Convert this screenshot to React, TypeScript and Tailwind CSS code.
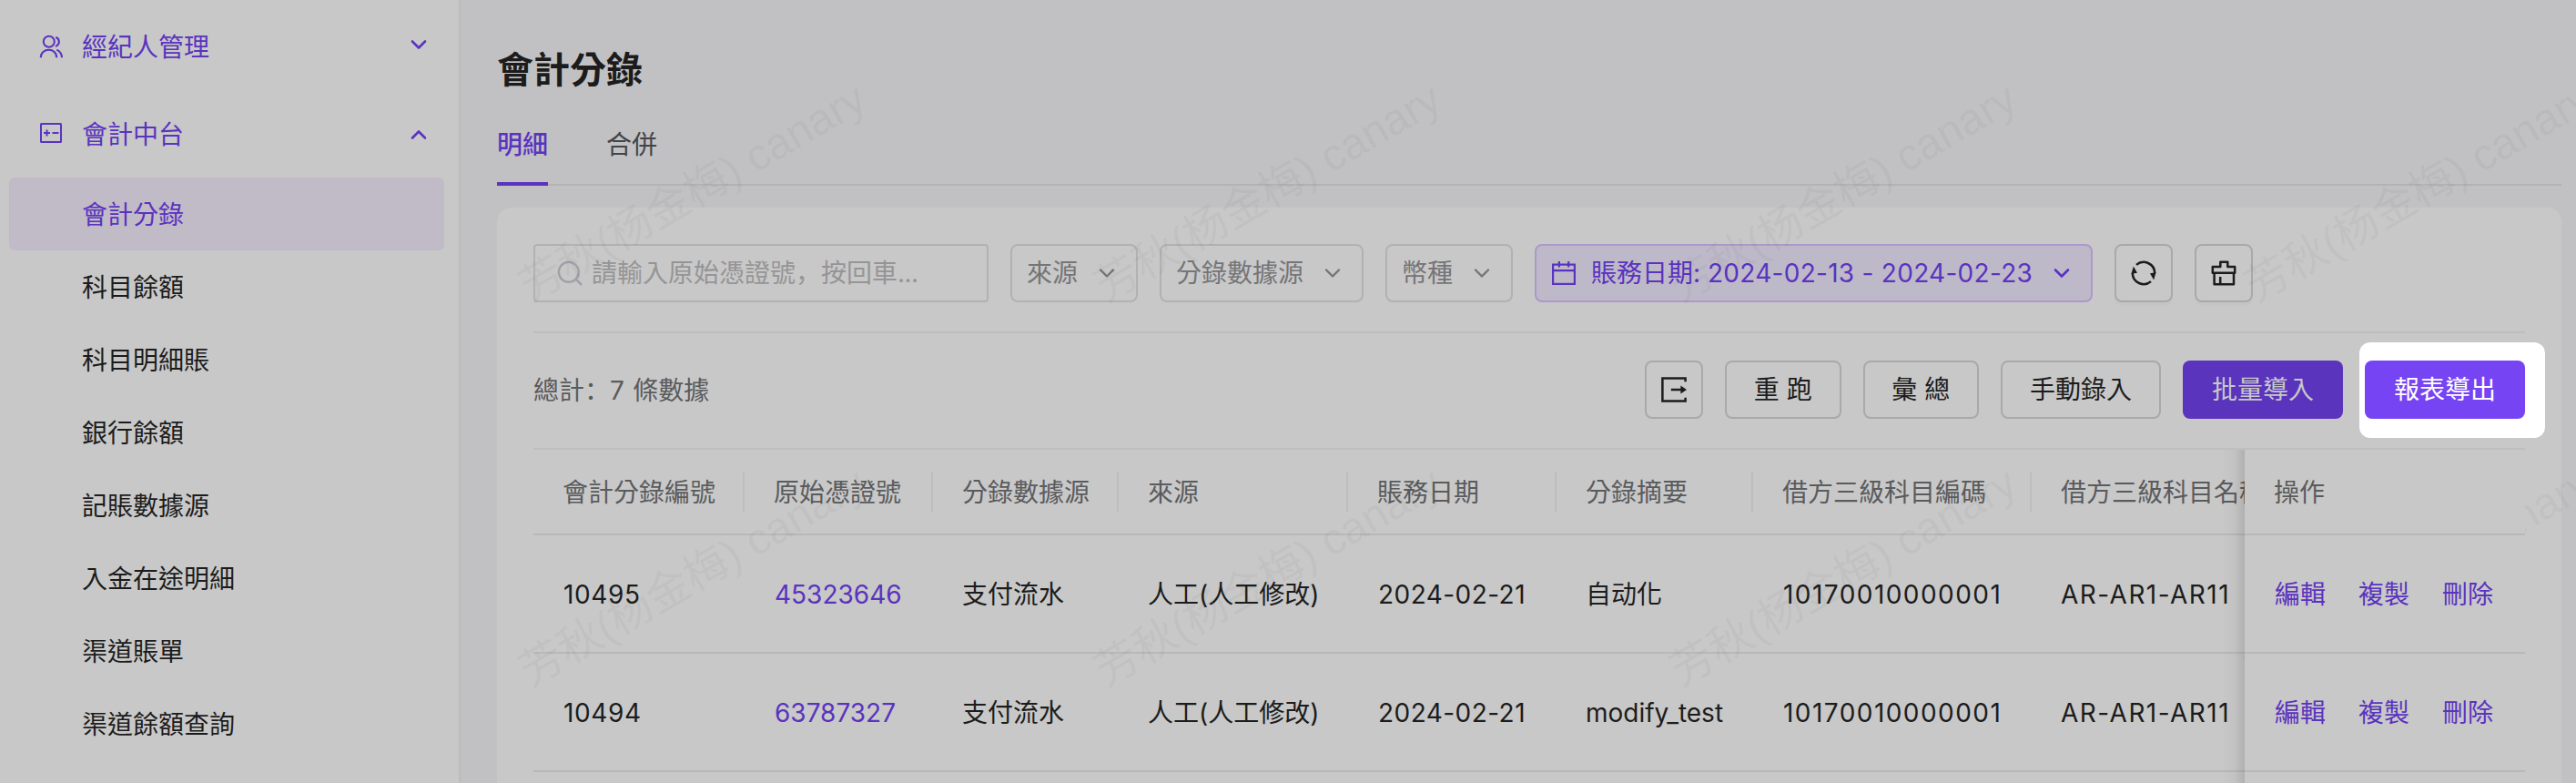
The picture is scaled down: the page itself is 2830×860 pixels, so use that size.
import React from "react";

const SUB_ITEMS = ["會計分錄", "科目餘額", "科目明細賬", "銀行餘額", "記賬數據源", "入金在途明細", "渠道賬單", "渠道餘額查詢"];

const COLUMNS = [
  { title: "會計分錄編號", width: "w-[232px]", cell: "pl-[33px] tracking-[0.6px]" },
  { title: "原始憑證號", width: "w-[207px]", cell: "pl-[33px] text-[#5a33bf]" },
  { title: "分錄數據源", width: "w-[204px]", cell: "pl-8" },
  { title: "來源", width: "w-[252px]", cell: "pl-8" },
  { title: "賬務日期", width: "w-[229px]", cell: "pl-[33px] tracking-[0.45px]" },
  { title: "分錄摘要", width: "w-[216px]", cell: "pl-8" },
  { title: "借方三級科目編碼", width: "w-[306px]", cell: "pl-[33px] tracking-[1.45px]" },
  { title: "借方三級科目名稱", width: "w-[306px]", cell: "pl-8 tracking-[1.45px]" },
];

const ROWS = [
  ["10495", "45323646", "支付流水", "人工(人工修改)", "2024-02-21", "自动化", "10170010000001", "AR-AR1-AR11"],
  ["10494", "63787327", "支付流水", "人工(人工修改)", "2024-02-21", "modify_test", "10170010000001", "AR-AR1-AR11"],
];

const WATERMARKS = [0, 1, 2, 3].flatMap((col) => [0, 1].map((row) => ({ left: 69 + col * 632, top: 295 + row * 422 })));

function Chevron({ up = false, className = "" }: { up?: boolean; className?: string }) {
  return (
    <svg viewBox="0 0 18 12" className={`h-3 w-[18px] shrink-0 ${className}`} fill="none" stroke="currentColor" strokeLinecap="round" strokeLinejoin="round">
      <path d={up ? "M2 9.5 9 2.5 16 9.5" : "M2 2.5 9 9.5 16 2.5"} />
    </svg>
  );
}

function UsersIcon() {
  return (
    <svg viewBox="0 0 26 26" className="size-[26px] shrink-0" fill="none" stroke="currentColor" strokeWidth="2.1">
      <circle cx="10.8" cy="7.7" r="6" />
      <path d="M1.8 25.2C1.8 19.8 6 16.8 10.6 16.8S19.2 19.8 19.2 25.2" />
      <path d="M18.3 3.1C22.9 4.6 23.2 10.8 18 13" />
      <path d="M19.3 16.6C22.5 18 24.8 21 25 25.2" />
    </svg>
  );
}

function LedgerIcon() {
  return (
    <svg viewBox="0 0 24 22" className="h-[22px] w-6 shrink-0" fill="none" stroke="currentColor" strokeWidth="2">
      <rect x="1" y="1" width="22" height="20" rx="0.5" />
      <path d="M4 11h7M7.5 7.5v7M13.5 11h7" />
    </svg>
  );
}

function SearchIcon() {
  return (
    <svg viewBox="0 0 28 28" className="size-7 shrink-0 text-[#a0a2a8]" fill="none" stroke="currentColor" strokeWidth="2.5">
      <circle cx="12.8" cy="12.8" r="11" />
      <path d="M20.6 20.6 27 27" />
    </svg>
  );
}

function CalendarIcon() {
  return (
    <svg viewBox="0 0 26 26" className="size-[26px] shrink-0" fill="none" stroke="currentColor" strokeWidth="2.2">
      <rect x="1.1" y="3.6" width="23.8" height="21.3" />
      <path d="M1 10.2h24M7.9 0v6.4M18.2 0v6.4" />
    </svg>
  );
}

function SyncIcon() {
  return (
    <svg viewBox="0 0 28 28" className="size-7 shrink-0" fill="none" stroke="currentColor" strokeWidth="2.5">
      <path d="M1.8 14A12.2 12.2 0 0 0 22 23.1" />
      <path d="M6 4.9A12.2 12.2 0 0 1 26.2 14" />
      <path d="M2.9 6.6 7 13.8.4 14.7ZM25.1 21.4 21 14.2 27.6 13.3Z" fill="currentColor" stroke="none" />
    </svg>
  );
}

function ClearIcon() {
  return (
    <svg viewBox="0 0 28 28" className="size-7 shrink-0" fill="none" stroke="currentColor" strokeWidth="2.5" strokeLinejoin="round">
      <path d="M10.3 7V1.7h8V7h7.9v6.8H1.8V7Z" />
      <path d="M3.6 13.8V26.3H25V13.8M10.2 18v8" />
    </svg>
  );
}

function ExportIcon() {
  return (
    <svg viewBox="0 0 28 28" className="size-7 shrink-0" fill="none" stroke="currentColor" strokeWidth="2.5">
      <path d="M26.6 5.2V1.4H1.4V26.6H26.6V22.8" />
      <path d="M10.8 14H24" />
      <path d="M21.4 9.6 28 14 21.4 18.4Z" fill="currentColor" stroke="none" />
    </svg>
  );
}

function Punct({ children }: { children: React.ReactNode }) {
  return <span className="font-['Noto_Sans_CJK_SC',sans-serif] leading-none">{children}</span>;
}

function Sidebar() {
  return (
    <aside className="flex w-[506px] shrink-0 flex-col border-r-2 border-[#bcbcbd] bg-[#c8c8c8]">
      <div className="flex h-[96px] items-center pt-[6px] pr-[35px] pl-[43px] text-[#5a33bf]">
        <UsersIcon />
        <span className="ml-[21px] flex-1 pt-px">經紀人管理</span>
        <Chevron className="mb-[4px] stroke-[2.6]" />
      </div>
      <div className="flex h-[99px] items-center pr-[35px] pl-[44px] text-[#5a33bf]">
        <LedgerIcon />
        <span className="ml-[22px] flex-1 pt-[5px]">會計中台</span>
        <Chevron up className="mt-[5px] stroke-[2.6]" />
      </div>
      {SUB_ITEMS.map((item, i) => (
        <div
          key={item}
          className={`ml-[10px] mr-4 flex h-20 shrink-0 items-center rounded-md pt-[2px] pl-20 ${i === 0 ? "bg-[#c1bac7] text-[#5a33bf]" : ""}`}
        >
          {item}
        </div>
      ))}
    </aside>
  );
}

function FilterSelect({ label, width }: { label: string; width: string }) {
  return (
    <div className={`flex h-16 items-center justify-between rounded-lg border-2 border-[#b1b1b6] pr-[23px] pl-4 text-[#757577] ${width}`}>
      {label}
      <Chevron className="stroke-[2.4]" />
    </div>
  );
}

function Filters() {
  return (
    <div className="flex h-[138px] items-center border-b-2 border-[#bdbdbe] pt-2">
      <div className="flex h-16 w-[500px] items-center rounded border-2 border-[#b1b1b6] pl-6 text-[#959596]">
        <SearchIcon />
        <span className="ml-[10px]">
          請輸入原始憑證號<Punct>，</Punct>按回車<span className="tracking-[-0.6px]">...</span>
        </span>
      </div>
      <div className="ml-6 flex gap-6">
        <FilterSelect label="來源" width="w-[140px]" />
        <FilterSelect label="分錄數據源" width="w-[224px]" />
        <FilterSelect label="幣種" width="w-[140px]" />
        <div className="flex h-16 w-[613px] items-center rounded-lg border-2 border-[#ac98ca] bg-[#beb9c9] pr-[23px] pl-[17px] text-[#5a33bf]">
          <CalendarIcon />
          <span className="ml-[17px] flex-1 whitespace-pre">
            賬務日期: <span className="tracking-[0.28px]">2024-02-13 - 2024-02-23</span>
          </span>
          <Chevron className="stroke-[2.6]" />
        </div>
        <button className="flex size-16 items-center justify-center rounded-lg border-2 border-[#a9a9a9] shadow-[0_4px_0_rgba(0,0,0,0.016)]">
          <SyncIcon />
        </button>
        <button className="flex size-16 items-center justify-center rounded-lg border-2 border-[#a9a9a9] shadow-[0_4px_0_rgba(0,0,0,0.016)]">
          <ClearIcon />
        </button>
      </div>
    </div>
  );
}

function Actions() {
  return (
    <div className="flex h-[126px] items-center justify-between pb-[2px]">
      <span className="pt-[2px] whitespace-pre text-[#5a5b5d]">
        總計<Punct>：</Punct><span className="tracking-[0.8px]">7 </span>條數據
      </span>
      <div className="flex gap-6">
        <button className="flex size-16 items-center justify-center rounded-lg border-2 border-[#a9a9a9]">
          <ExportIcon />
        </button>
        <button className="h-16 w-[127.5px] rounded-lg border-2 border-[#a9a9a9]">重 跑</button>
        <button className="h-16 w-[127.5px] rounded-lg border-2 border-[#a9a9a9]">彙 總</button>
        <button className="h-16 w-[176px] rounded-lg border-2 border-[#a9a9a9]">手動錄入</button>
        <button className="h-16 w-[176px] rounded-lg bg-[#5a34bc] text-[#c8c8c8]">批量導入</button>
        <div className="relative h-16 w-[176px]">
          <div className="absolute -top-5 -left-[6px] h-[105px] w-[204px] rounded-xl bg-white" />
          <button className="relative h-16 w-[176px] rounded-lg bg-[#7644f3] text-white">報表導出</button>
        </div>
      </div>
    </div>
  );
}

function Table() {
  return (
    <div className="relative flex h-[380px] overflow-hidden">
      <div className="w-[1880px] shrink-0 overflow-hidden">
        <div className="w-[1952px]">
          <div className="flex h-24 items-center border-t-2 border-b-2 border-t-[#bfbfc0] border-b-[#b8b8b9] text-[#5a5b5d]">
            {COLUMNS.map((c) => (
              <div key={c.title} className={`flex h-11 shrink-0 items-center border-r-2 border-[#bdbdbe] pt-px pl-8 whitespace-nowrap ${c.width}`}>
                {c.title}
              </div>
            ))}
          </div>
          {ROWS.map((row) => (
            <div key={row[0]} className="flex h-[130px] items-center border-b-2 border-[#b8b8b9] pt-[2px]">
              {row.map((cell, i) => (
                <div key={i} className={`shrink-0 whitespace-nowrap ${COLUMNS[i].width} ${COLUMNS[i].cell}`}>
                  {cell}
                </div>
              ))}
            </div>
          ))}
        </div>
      </div>
      <div className="absolute top-[2px] left-[1848px] h-full w-8 bg-gradient-to-r from-transparent from-20% via-black/3 via-65% to-black/12" />
    </div>
  );
}

function FixedColumn() {
  return (
    <div className="absolute top-[492px] left-[1960px] w-[308px] bg-[#c8c8c8]">
      <div className="flex h-24 items-center border-t-2 border-b-2 border-t-[#bfbfc0] border-b-[#b8b8b9] pt-px pl-8 text-[#5a5b5d]">操作</div>
      {ROWS.map((row) => (
        <div key={row[0]} className="flex h-[130px] items-center gap-9 border-b-2 border-[#b8b8b9] pt-[2px] pl-[33px] text-[#5a33bf]">
          <span>編輯</span>
          <span>複製</span>
          <span>刪除</span>
        </div>
      ))}
      <div className="h-3" />
    </div>
  );
}

export default function App() {
  return (
    <div className="flex h-[860px] w-[2830px] overflow-hidden bg-[#c1c1c3] font-['Inter','Noto_Sans_CJK_TC',sans-serif] text-[28px] leading-[44px] text-[#1c1c1c]">
      <Sidebar />
      <main className="relative h-full flex-1 overflow-hidden pr-4 pl-10">
        <h1 className="h-[104px] pt-[49px] text-[40px] leading-[56px] font-bold">會計分錄</h1>
        <div className="flex h-[100px] gap-16 border-b-2 border-[#b3b3b5]">
          <div className="h-[100px] border-b-4 border-[#5a33bf] pt-[33px] font-medium text-[#5a33bf]">明細</div>
          <div className="pt-[33px] text-[#424548]">合併</div>
        </div>
        <div className="mt-6 h-[640px] rounded-t-2xl bg-[#c8c8c8] px-10">
          <Filters />
          <Actions />
          <Table />
        </div>
        <div className="pointer-events-none absolute inset-0 overflow-hidden">
          {WATERMARKS.map((w) => (
            <span
              key={`${w.left}-${w.top}`}
              className="absolute origin-left -rotate-30 font-['Liberation_Sans','Noto_Sans_CJK_SC',sans-serif] text-[48px] leading-[48px] whitespace-pre text-black/3"
              style={{ left: w.left, top: w.top }}
            >
              芳秋(杨金梅) canary
            </span>
          ))}
        </div>
        <FixedColumn />
      </main>
    </div>
  );
}
